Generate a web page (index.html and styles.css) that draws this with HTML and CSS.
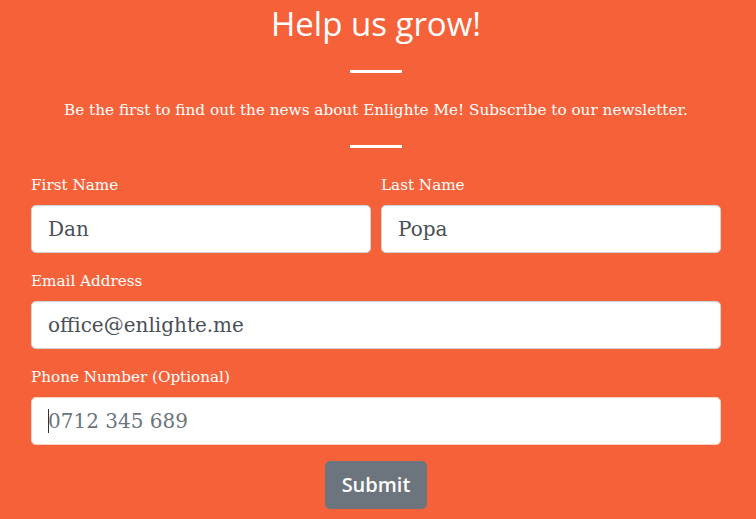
FILE: index.html
```html
<!DOCTYPE html>
<html lang="en">
<head>
<meta charset="utf-8">
<title>Help us grow!</title>
<link rel="stylesheet" href="styles.css">
</head>
<body>
<section class="signup">
  <h1 class="title">Help us grow!</h1>
  <div class="rule rule-top"></div>
  <p class="lead">Be the first to find out the news about Enlighte Me! Subscribe to our newsletter.</p>
  <div class="rule rule-bottom"></div>
  <form class="form">
    <div class="row">
      <div class="group">
        <label class="label" for="fn">First Name</label>
        <input class="field" id="fn" type="text" value="Dan">
      </div>
      <div class="group">
        <label class="label" for="ln">Last Name</label>
        <input class="field" id="ln" type="text" value="Popa">
      </div>
    </div>
    <div class="group">
      <label class="label" for="em">Email Address</label>
      <input class="field" id="em" type="email" value="office@enlighte.me">
    </div>
    <div class="group">
      <label class="label" for="ph">Phone Number (Optional)</label>
      <div class="field-wrap">
        <input class="field field-focus" id="ph" type="tel" placeholder="0712 345 689">
        <span class="caret"></span>
      </div>
    </div>
    <div class="actions">
      <button class="submit" type="button">Submit</button>
    </div>
  </form>
</section>
</body>
</html>
```
FILE: styles.css
```css
* { box-sizing: border-box; }

html, body {
  margin: 0;
  padding: 0;
}

body {
  background: #f5623a;
  font-family: "DejaVu Serif", "Liberation Serif", serif;
  color: #ffffff;
}

.signup {
  padding: 0 35px 0 31px;
}

.title {
  margin: 0;
  padding-top: 2px;
  font-family: "Open Sans", "Noto Sans", sans-serif;
  font-weight: 400;
  font-size: 33px;
  line-height: 44px;
  text-align: center;
}

.rule {
  width: 52px;
  height: 3px;
  background: #ffffff;
  margin: 0 auto;
}

.rule-top {
  margin-top: 24px;
}

.lead {
  margin: 26px 0 0;
  font-size: 15.25px;
  line-height: 22px;
  text-align: center;
}

.rule-bottom {
  margin-top: 24px;
}

.form {
  margin-top: 25px;
}

.row {
  display: grid;
  grid-template-columns: 1fr 1fr;
  gap: 10px;
}

.group {
  display: flex;
  flex-direction: column;
  margin-bottom: 16px;
}

.label {
  font-size: 15.2px;
  line-height: 24px;
  margin-bottom: 8px;
}

.field-wrap {
  position: relative;
}

.field {
  display: block;
  width: 100%;
  height: 48px;
  padding: 8px 16px;
  font-family: "DejaVu Serif", "Liberation Serif", serif;
  font-size: 20px;
  line-height: 30px;
  color: #495057;
  background: #ffffff;
  border: 1px solid #ced4da;
  border-radius: 4.8px;
  outline: none;
}

.field::placeholder {
  color: #6c757d;
  opacity: 1;
}

.field-focus {
  border-color: #fbd3c6;
}

.caret {
  position: absolute;
  left: 17px;
  top: 12px;
  width: 1px;
  height: 24px;
  background: #333333;
}

.actions {
  display: flex;
  justify-content: center;
}

.submit {
  font-family: "Open Sans", "Noto Sans", sans-serif;
  font-weight: 600;
  font-size: 20px;
  line-height: 30px;
  padding: 8px 16px;
  color: #ffffff;
  background: #6c757d;
  border: 1px solid #6c757d;
  border-radius: 4.8px;
}
```
